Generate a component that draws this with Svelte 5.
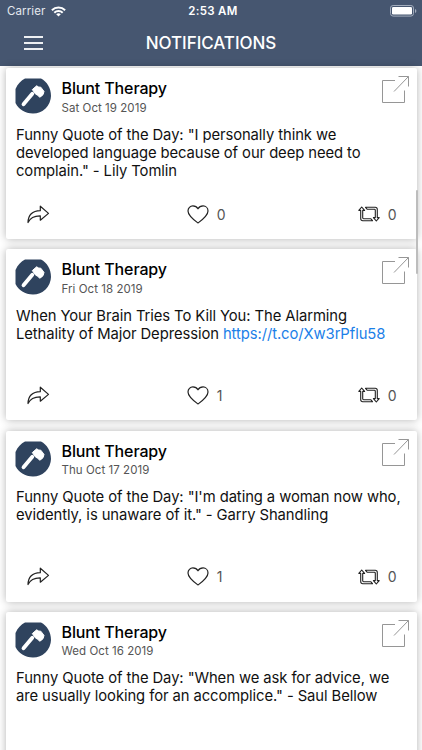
<script lang="ts">
	type Post = {
		id: number;
		author: string;
		date: string;
		text: string;
		link?: string;
		stats?: { likes: number; retweets: number };
	};

	const posts: Post[] = [
		{
			id: 1,
			author: 'Blunt Therapy',
			date: 'Sat Oct 19 2019',
			text: 'Funny Quote of the Day: "I personally think we developed language because of our deep need to complain." - Lily Tomlin',
			stats: { likes: 0, retweets: 0 }
		},
		{
			id: 2,
			author: 'Blunt Therapy',
			date: 'Fri Oct 18 2019',
			text: 'When Your Brain Tries To Kill You: The Alarming Lethality of Major Depression',
			link: 'https://t.co/Xw3rPflu58',
			stats: { likes: 1, retweets: 0 }
		},
		{
			id: 3,
			author: 'Blunt Therapy',
			date: 'Thu Oct 17 2019',
			text: 'Funny Quote of the Day: "I\'m dating a woman now who, evidently, is unaware of it." - Garry Shandling',
			stats: { likes: 1, retweets: 0 }
		},
		{
			id: 4,
			author: 'Blunt Therapy',
			date: 'Wed Oct 16 2019',
			text: 'Funny Quote of the Day: "When we ask for advice, we are usually looking for an accomplice." - Saul Bellow'
		}
	];
</script>

<div class="screen">
	<header>
		<div class="status">
			<div class="carrier">
				<span>Carrier</span>
				<svg width="15" height="11" viewBox="0 0 15 11" fill="none" stroke="#fff" stroke-width="2">
					<path d="M0.9 4.2a9.4 9.4 0 0 1 13.2 0" />
					<path d="M3.3 6.8a6 6 0 0 1 8.4 0" />
					<path d="M7.5 10.6 5.2 8.3a3.3 3.3 0 0 1 4.6 0z" fill="#fff" stroke="none" />
				</svg>
			</div>
			<span class="time">2:53 AM</span>
			<svg class="battery" width="27" height="12" viewBox="0 0 27 12">
				<rect x="0.5" y="0.5" width="23" height="10.6" rx="2.6" fill="none" stroke="#a3adbd" />
				<rect x="2" y="2" width="20" height="7.6" rx="1.3" fill="#fff" />
				<path d="M25 4v4q1.4-.6 1.4-2T25 4z" fill="#a3adbd" />
			</svg>
		</div>
		<nav>
			<button class="menu" aria-label="Menu">
				<span></span>
				<span></span>
				<span></span>
			</button>
			<h1>NOTIFICATIONS</h1>
		</nav>
	</header>

	<main>
		{#each posts as post (post.id)}
			<article>
				<div class="top">
					<svg class="avatar" width="36" height="36" viewBox="0 0 36 36">
						<path d="M10 .5h16C32 3.500 36 10 36 18a18 18 0 0 1-18 17.500C10 35.500 3.500 31 .5 25V11C2.500 6 6 2.500 10 .5z" fill="#2f435e" />
						<path d="M8.500 26.300 17.300 15.800" stroke="#fff" stroke-width="3.800" stroke-linecap="round" />
						<path
							d="M17.300 11.600 21.700 7.800Q23.500 9.600 25.800 9.200L29 13.400Q29.200 17 24.700 19.300 22.700 16.600 20.700 16.200z"
							fill="#fff"
							stroke="#fff"
							stroke-linejoin="round"
						/>
					</svg>
					<div class="who">
						<h2>{post.author}</h2>
						<time>{post.date}</time>
					</div>
					<svg class="open" width="28" height="28" viewBox="0 0 28 28" fill="none" stroke="#969696">
						<path d="M13 5.500H.5v22h22V15.500M12 16.500 26.500 1.500M16.500 1.500h10v10" />
					</svg>
				</div>
				<p>
					{post.text}
					{#if post.link}<a href={post.link}>{post.link}</a>{/if}
				</p>
				{#if post.stats}
					<div class="actions">
						<svg width="23" height="19" viewBox="0 0 23 19" fill="none" stroke="#222" stroke-width="1.200" stroke-linejoin="round">
							<path d="M1 17.500C1.200 10.500 5 6 13.300 5.700V1.200l8.200 7.200-8.200 6.800v-4.400C7.500 10.700 3.500 12.300 1 17.500z" />
						</svg>
						<div class="likes">
							<svg width="22" height="19" viewBox="0 0 22 19" fill="none" stroke="#222" stroke-width="1.200" stroke-linejoin="round">
								<path d="M11 18C6.500 14.600 1 10.500 1 5.900 1 3 3.200.9 5.900.9 8.200.9 10 2 11 3.800 12 2 13.800.9 16.100.9 18.800.9 21 3 21 5.900 21 10.500 15.500 14.600 11 18z" />
							</svg>
							<span>{post.stats.likes}</span>
						</div>
						<div class="retweets">
							<svg width="22" height="16" viewBox="0 0 22 16" fill="none" stroke="#222" stroke-width="1.100" stroke-linejoin="round">
								<path d="M3.700 1 .8 4.400h1.900v8.200q0 2.100 2.100 2.100h9.700l-1.800-2H5.600q-.9 0-.9-.9V4.400h1.900z" />
								<path d="M18.300 15l2.900-3.400h-1.900V3.400q0-2.100-2.100-2.100H7.500l1.800 2h7.100q.9 0 .9.900v7.400h-1.900z" />
							</svg>
							<span>{post.stats.retweets}</span>
						</div>
					</div>
				{/if}
			</article>
		{/each}
		<div class="scrollbar"></div>
	</main>
</div>

<style>
	:global(body) {
		margin: 0;
		background: #fff;
	}

	.screen {
		height: 750px;
		overflow: hidden;
		display: flex;
		flex-direction: column;
		font-family: Inter, 'Liberation Sans', sans-serif;
		color: #111;
	}

	header {
		flex: none;
		height: 65.500px;
		background: #465670;
		color: #fff;
	}

	.status {
		height: 22px;
		padding: 0 5px 0 7px;
		display: grid;
		grid-template-columns: 1fr auto 1fr;
		align-items: center;
		font-size: 11.500px;
	}

	.carrier {
		display: flex;
		align-items: center;
		gap: 6px;
		color: #e4e8ee;
		letter-spacing: 0.1px;
	}

	.time {
		font-weight: 600;
		letter-spacing: 0.3px;
		margin-left: 2px;
	}

	.battery {
		justify-self: end;
	}

	nav {
		height: 42px;
		display: grid;
		grid-template-columns: 43px 1fr 43px;
		align-items: center;
	}

	.menu {
		width: 19px;
		margin-left: 24px;
		padding: 0;
		border: 0;
		background: none;
		display: flex;
		flex-direction: column;
		gap: 4px;
	}

	.menu span {
		height: 2px;
		background: #eef0f3;
	}

	h1 {
		margin: 0;
		text-align: center;
		font-size: 17px;
		letter-spacing: -0.05px;
		font-weight: 500;
	}

	main {
		position: relative;
		flex: 1;
		min-height: 0;
		padding: 2.500px 5.500px 0 6px;
		display: flex;
		flex-direction: column;
		gap: 10.300px;
	}

	article {
		flex: none;
		height: 171px;
		box-sizing: border-box;
		padding: 9px 7px 0 9px;
		display: flex;
		flex-direction: column;
		border-radius: 2px;
		background: #fff;
		box-shadow: 0 0 8px rgba(0, 0, 0, 0.3);
	}

	.top {
		display: flex;
		align-items: flex-start;
		height: 48px;
	}

	.avatar {
		margin-top: 1px;
	}

	.open {
		margin-top: -2px;
	}

	.who {
		flex: 1;
		margin-left: 10.500px;
	}

	h2 {
		margin: 1px 0 0;
		font-size: 16px;
		line-height: 20px;
		letter-spacing: -0.12px;
		font-weight: 500;
		color: #000;
	}

	time {
		display: block;
		margin-top: 2.500px;
		font-size: 11.500px;
		line-height: 15px;
		letter-spacing: 0.05px;
		color: #555;
	}

	p {
		margin: 0.500px 6px 0 1px;
		height: 71.500px;
		font-size: 14.800px;
		line-height: 18px;
		letter-spacing: -0.08px;
	}

	a {
		color: #1b80e8;
		text-decoration: none;
	}

	.actions {
		display: grid;
		grid-template-columns: 1fr auto 1fr;
		align-items: center;
		height: 34px;
		padding: 0 13px 0 12px;
		font-size: 14px;
		color: #555;
	}

	.likes,
	.retweets {
		display: flex;
		align-items: center;
		gap: 8px;
	}

	.likes {
		margin-right: 11px;
	}

	.likes span {
		min-width: 9px;
	}

	.retweets {
		justify-self: end;
	}

	.scrollbar {
		position: absolute;
		top: 124px;
		right: 4px;
		width: 2px;
		height: 84px;
		border-radius: 2px;
		background: #bdbdbd;
	}
</style>
